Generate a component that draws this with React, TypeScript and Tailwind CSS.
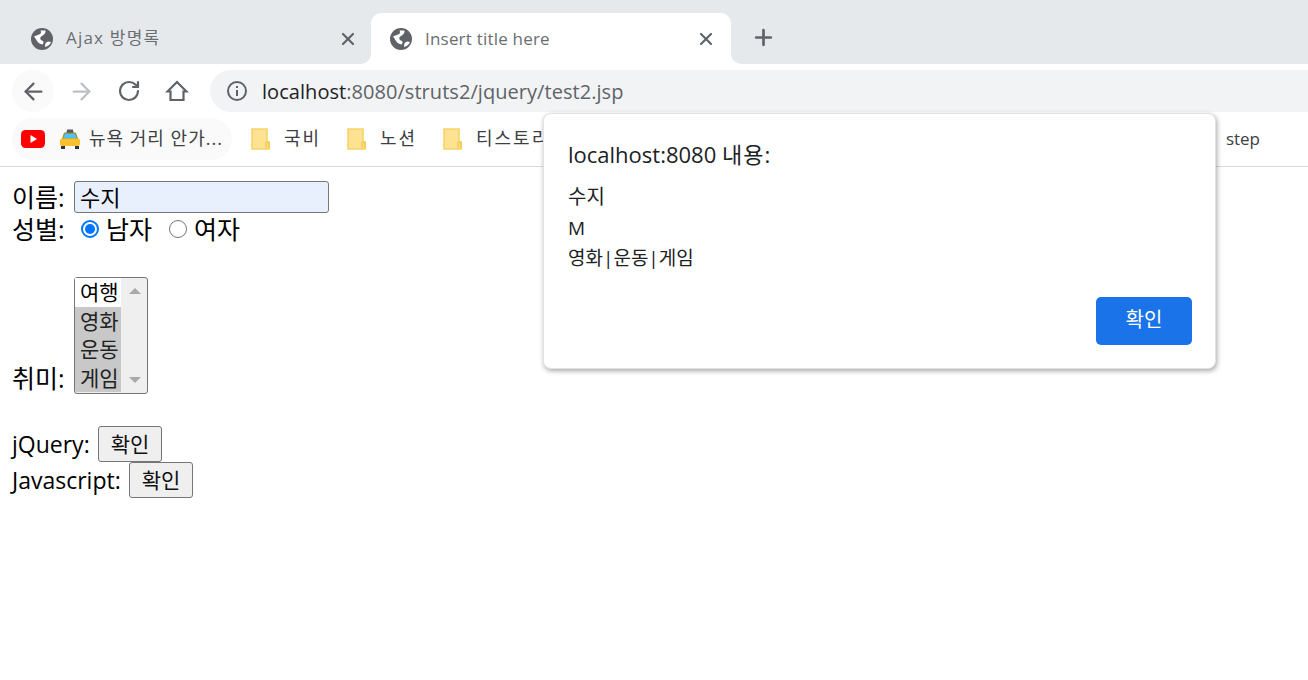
import React from 'react';
import { ArrowLeft, ArrowRight, Plus, RotateCw, X } from 'lucide-react';

const ui = 'font-["Open_Sans","Noto_Sans_CJK_KR",sans-serif]';

function Globe() {
  return (
    <svg width="22" height="22" viewBox="0 0 22 22" className="shrink-0">
      <circle cx="11" cy="11" r="11" fill="#5f6368" />
      <path d="M3 8.5 L8 6.5 C10 6 10.5 4 9.5 2.5 L14.5 2.5 C15 5 13 7 11 8 C8.5 9 9 12 11 12.5 C13 13 13 15 11.5 16.5 C9 16 7 15 6 13 C5 11 4 10 3 8.5 Z" fill="#fff" />
      <path d="M14 19 C14 16 14.5 14 17 13.5 L20 14 C19 16.5 17 18.5 14 19 Z" fill="#fff" />
    </svg>
  );
}

function Tab({ title, active }: { title: string; active?: boolean }) {
  return (
    <div className={active ? 'relative z-10 flex h-[51px] w-[360px] items-center rounded-t-[10px] bg-white pl-[19px] pr-[15px]' : 'flex h-[51px] w-[359px] items-center pl-[19px] pr-[13px]'}>
      {active && (
        <>
          <span className="absolute bottom-0 left-[-10px] h-[10px] w-[10px] bg-white">
            <span className="block h-full w-full rounded-br-[10px] bg-[#e6e9ec]" />
          </span>
          <span className="absolute bottom-0 right-[-10px] h-[10px] w-[10px] bg-white">
            <span className="block h-full w-full rounded-bl-[10px] bg-[#e6e9ec]" />
          </span>
        </>
      )}
      <Globe />
      <span className={active ? `ml-[13px] flex-1 pb-[1px] text-[17px] leading-none tracking-[0.2px] text-[#6a6e73] ${ui}` : `ml-[13px] flex-1 pb-[2px] text-[17px] leading-none tracking-[1.2px] text-[#6a6e73] ${ui}`}>{title}</span>
      <X size={20} strokeWidth={2.6} className="text-[#5f6368]" />
    </div>
  );
}

function Folder() {
  return (
    <svg width="19" height="22" viewBox="0 0 19 22" className="shrink-0">
      <path d="M1 1 H16 V14 H18 V21 H1 Z" fill="#fde293" stroke="#f7d468" strokeWidth="1.6" />
      <path d="M15 21 V14.5 H18 V21" fill="none" stroke="#f2c94c" strokeWidth="1.4" />
    </svg>
  );
}

function Bookmark({ label }: { label: string }) {
  return (
    <div className="flex w-[96px] items-center gap-[14px]">
      <Folder />
      <span className={`whitespace-nowrap pb-[3px] text-[18px] leading-none tracking-[2px] text-[#3c4043] ${ui}`}>{label}</span>
    </div>
  );
}

function Radio({ on }: { on?: boolean }) {
  return on ? (
    <span className="flex h-[18px] w-[18px] items-center justify-center rounded-full border-2 border-[#0075ff] bg-white">
      <span className="h-[10px] w-[10px] rounded-full bg-[#0075ff]" />
    </span>
  ) : (
    <span className="block h-[18px] w-[18px] rounded-full border-[1.5px] border-[#767676] bg-white" />
  );
}

function PageButton() {
  return (
    <button className="h-[36px] w-[64px] rounded-[3px] border border-[#767676] bg-[#efefef] text-[21px] leading-none text-[#111]">확인</button>
  );
}

export default function App() {
  return (
    <div className={`relative h-[680px] w-[1308px] overflow-hidden bg-white ${ui}`}>
      {/* tab strip */}
      <div className="flex h-[64px] items-end bg-[#e6e9ec] pl-[12px]">
        <Tab title="Ajax 방명록" />
        <Tab title="Insert title here" active />
        <Plus size={25} strokeWidth={2.6} className="mb-[14px] ml-[20px] text-[#5f6368]" />
      </div>

      {/* toolbar */}
      <div className="flex h-[48px] items-start pl-[12px] pt-[6px]">
        <div className="flex h-[42px] w-[42px] items-center justify-center rounded-full bg-[#fafafb]">
          <ArrowLeft size={27} strokeWidth={2} className="text-[#5f6368]" />
        </div>
        <div className="ml-[6px] flex h-[42px] w-[42px] items-center justify-center">
          <ArrowRight size={27} strokeWidth={2} className="text-[#bdc1c6]" />
        </div>
        <div className="ml-[6px] flex h-[42px] w-[42px] items-center justify-center">
          <RotateCw size={24} strokeWidth={2.2} className="text-[#5f6368]" />
        </div>
        <div className="ml-[6px] flex h-[42px] w-[42px] items-center justify-center">
          <svg width="24" height="24" viewBox="0 0 24 24" fill="none" stroke="#5f6368" strokeWidth="2.2">
            <path d="M12 3 L2.5 12.5 H5.5 V21 H18.5 V12.5 H21.5 Z" strokeLinejoin="miter" />
          </svg>
        </div>
        <div className="ml-[12px] flex h-[42px] flex-1 items-center rounded-l-full bg-[#f1f3f4] pl-[17px]">
          <svg width="20" height="20" viewBox="0 0 20 20" fill="none" className="shrink-0">
            <circle cx="10" cy="10" r="9" stroke="#5f6368" strokeWidth="2" />
            <rect x="9" y="9" width="2" height="6" fill="#5f6368" />
            <rect x="9" y="5" width="2" height="2" fill="#5f6368" />
          </svg>
          <span className="ml-[15px] pt-[1px] text-[20px] leading-none tracking-[0.05px] text-[#5f6368]">
            <span className="text-[#202124]">localhost</span>:8080/struts2/jquery/test2.jsp
          </span>
        </div>
      </div>

      {/* bookmarks */}
      <div className="flex h-[55px] items-center border-b border-[#d9dadc] pl-[12px]">
        <div className="flex h-[42px] w-[220px] items-center rounded-full bg-[#fafafb] pl-[9px]">
          <svg width="24" height="18" viewBox="0 0 24 18" className="shrink-0">
            <rect width="24" height="18" rx="4.5" fill="#ff0000" />
            <path d="M9.5 5 L16 9 L9.5 13 Z" fill="#fff" />
          </svg>
          <svg width="22" height="22" viewBox="0 0 22 22" className="ml-[14px] shrink-0">
            <path d="M8 1.5 H14 L14.5 5 H7.5 Z" fill="#5b5b5b" />
            <path d="M5.5 5 H16.5 L18.5 11 H3.5 Z" fill="#4fc3f7" stroke="#a67c00" strokeWidth="1" />
            <rect x="1" y="10.5" width="20" height="7.5" rx="2" fill="#fbc02d" />
            <rect x="2" y="18" width="4" height="3" fill="#333" />
            <rect x="16" y="18" width="4" height="3" fill="#333" />
          </svg>
          <span className="ml-[8px] whitespace-nowrap pb-[3px] text-[18px] leading-none tracking-[1px] text-[#3c4043]">뉴욕 거리 안가...</span>
        </div>
        <div className="ml-[19px] flex">
          <Bookmark label="국비" />
          <Bookmark label="노션" />
          <Bookmark label="티스토리" />
        </div>
        <span className="ml-auto mr-[48px] pb-[1px] text-[17px] leading-none text-[#3c4043]">step</span>
      </div>

      {/* page */}
      <div className="flex flex-col pl-[12px] pt-[14px] text-[23px] leading-[32px] text-black">
        <div className="flex h-[32px] items-center">
          <span className="w-[62px] pb-[1px] text-[25px]">이름:</span>
          <div className="flex h-[32px] w-[255px] items-center rounded-[3px] border border-[#767676] bg-[#e8f0fe] pl-[5px] text-[22px]">수지</div>
        </div>
        <div className="flex h-[32px] items-center">
          <span className="w-[69px] pb-[1px] text-[25px]">성별:</span>
          <Radio on />
          <span className="ml-[7px] pb-[1px] text-[25px]">남자</span>
          <span className="ml-[17px]"><Radio /></span>
          <span className="ml-[7px] pb-[1px] text-[25px]">여자</span>
        </div>
        <div className="mt-[32px] flex items-end">
          <span className="w-[62px] text-[25px]">취미:</span>
          <div className="flex h-[117px] w-[74px] rounded-[3px] border border-[#767676] bg-[#efefef] text-[21px] leading-[28.5px]">
            <div className="w-[46px]">
              <div className="bg-white pl-[5px]">여행</div>
              <div className="bg-[#c8c8c8] pl-[5px] text-[#222]">영화</div>
              <div className="bg-[#c8c8c8] pl-[5px] text-[#222]">운동</div>
              <div className="bg-[#c8c8c8] pl-[5px] text-[#222]">게임</div>
            </div>
            <div className="flex flex-1 flex-col items-center justify-between py-[10px] pl-[1px]">
              <span className="h-0 w-0 border-x-[6px] border-b-[6px] border-x-transparent border-b-[#a9a9a9]" />
              <span className="h-0 w-0 border-x-[6px] border-t-[6px] border-x-transparent border-t-[#a9a9a9]" />
            </div>
          </div>
        </div>
        <div className="mt-[32px] flex h-[36px] items-center">
          <span className="w-[86px]">jQuery:</span>
          <PageButton />
        </div>
        <div className="flex h-[36px] items-center">
          <span className="w-[117px]">Javascript:</span>
          <PageButton />
        </div>
      </div>

      {/* alert */}
      <div className="absolute left-[543px] top-[113px] h-[256px] w-[673px] rounded-[8px] border border-[#e3e3e3] bg-white pl-[24px] pt-[24px] shadow-[1px_2px_5px_rgba(0,0,0,0.35)]">
        <div className="text-[22px] leading-[32px] text-[#202124]">localhost:8080 <span className="tracking-[1px]">내용:</span></div>
        <div className="mt-[11px] text-[19px] leading-[30px] text-[#202124]">
          <div className="mb-[1px] pt-[1px] text-[20px]">수지</div>
          <div>M</div>
          <div>영화|운동|게임</div>
        </div>
        <button className="absolute bottom-[23px] right-[23px] h-[48px] w-[96px] rounded-[5px] bg-[#1a73e8] pb-[2px] text-[20px] text-white">확인</button>
      </div>
    </div>
  );
}
